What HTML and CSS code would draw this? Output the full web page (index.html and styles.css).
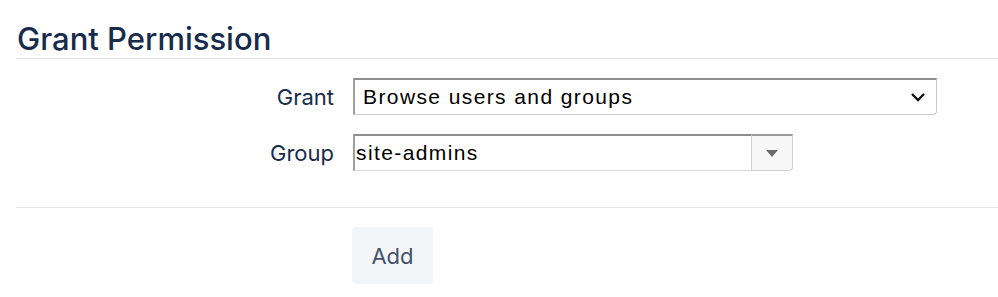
FILE: index.html
```html
<!DOCTYPE html>
<html>
<head>
  <title>Grant Permission</title>
  <link rel="stylesheet" href="styles.css">
</head>
<body>
  <div class="page">
    <h2 class="page-title">Grant Permission</h2>
    <form class="perm-form">
      <div class="field-group">
        <label for="permission">Grant</label>
        <div class="select-box">
          <span class="select-value">Browse users and groups</span>
          <svg class="chevron" width="16" height="10" viewBox="0 0 16 10">
            <path d="M2 2 L8 8 L14 2" fill="none" stroke="#111" stroke-width="2.4"/>
          </svg>
        </div>
      </div>
      <div class="field-group">
        <label for="group">Group</label>
        <div class="combo">
          <input type="text" id="group" class="combo-input" value="site-admins">
          <span class="combo-btn">
            <svg width="12" height="7" viewBox="0 0 12 7">
              <path d="M0 0 L12 0 L6 7 Z" fill="#6b6b6b"/>
            </svg>
          </span>
        </div>
      </div>
      <div class="buttons">
        <button type="button" class="btn">Add</button>
      </div>
    </form>
  </div>
</body>
</html>
```

FILE: styles.css
```css
/* grant permission form */
body {
  margin: 0;
  font-family: Inter, "Noto Sans", sans-serif;
  color: #172b4d;
  background: #fff;
}
.page {
  padding: 0 0 0 16px;
}
.page-title {
  margin: 0;
  padding: 20px 0 0 1px;
  font-size: 31px;
  font-weight: 500;
  line-height: 38px;
  color: #172b4d;
  border-bottom: 1px solid #dcdfe4;
  height: 38px;
}
.perm-form {
  padding-top: 19px;
}
.field-group {
  display: grid;
  grid-template-columns: 318px auto;
  column-gap: 19px;
  align-items: center;
  margin-bottom: 19px;
}
.field-group label {
  text-align: right;
  font-size: 22px;
  color: #172b4d;
}
.select-box {
  width: 584px;
  height: 37px;
  box-sizing: border-box;
  display: flex;
  align-items: center;
  justify-content: space-between;
  padding: 0 10px 0 8px;
  border: 1px solid #c9c9c9;
  border-top: 2px solid #8e8e8e;
  border-left: 2px solid #a0a0a0;
  border-radius: 0 0 4px 0;
  font-family: "Liberation Sans", Arial, sans-serif;
  font-size: 21px;
  letter-spacing: 1.4px;
  color: #000;
}
.combo {
  display: flex;
  width: 440px;
  height: 37px;
}
.combo-input {
  flex: 1;
  min-width: 0;
  box-sizing: border-box;
  height: 37px;
  margin: 0;
  padding: 0 1px;
  border: 1px solid #d6d6d6;
  border-top: 2px solid #8e8e8e;
  border-left: 2px solid #a0a0a0;
  border-right: none;
  font-family: "Liberation Sans", Arial, sans-serif;
  font-size: 21px;
  letter-spacing: 1.4px;
  color: #000;
  outline: none;
}
.combo-btn {
  width: 42px;
  box-sizing: border-box;
  display: flex;
  align-items: center;
  justify-content: center;
  background: #f7f7f7;
  border: 1px solid #d0d0d0;
  border-top: 2px solid #9a9a9a;
  border-radius: 0 0 4px 0;
}
.buttons {
  margin-top: 36px;
  border-top: 1px solid #e4e6ea;
  padding: 19px 0 0 336px;
}
.btn {
  width: 81px;
  height: 57px;
  border: none;
  border-radius: 4px;
  background: #f4f5f7;
  color: #42526e;
  font-family: inherit;
  font-size: 22px;
  padding: 0;
}
```
